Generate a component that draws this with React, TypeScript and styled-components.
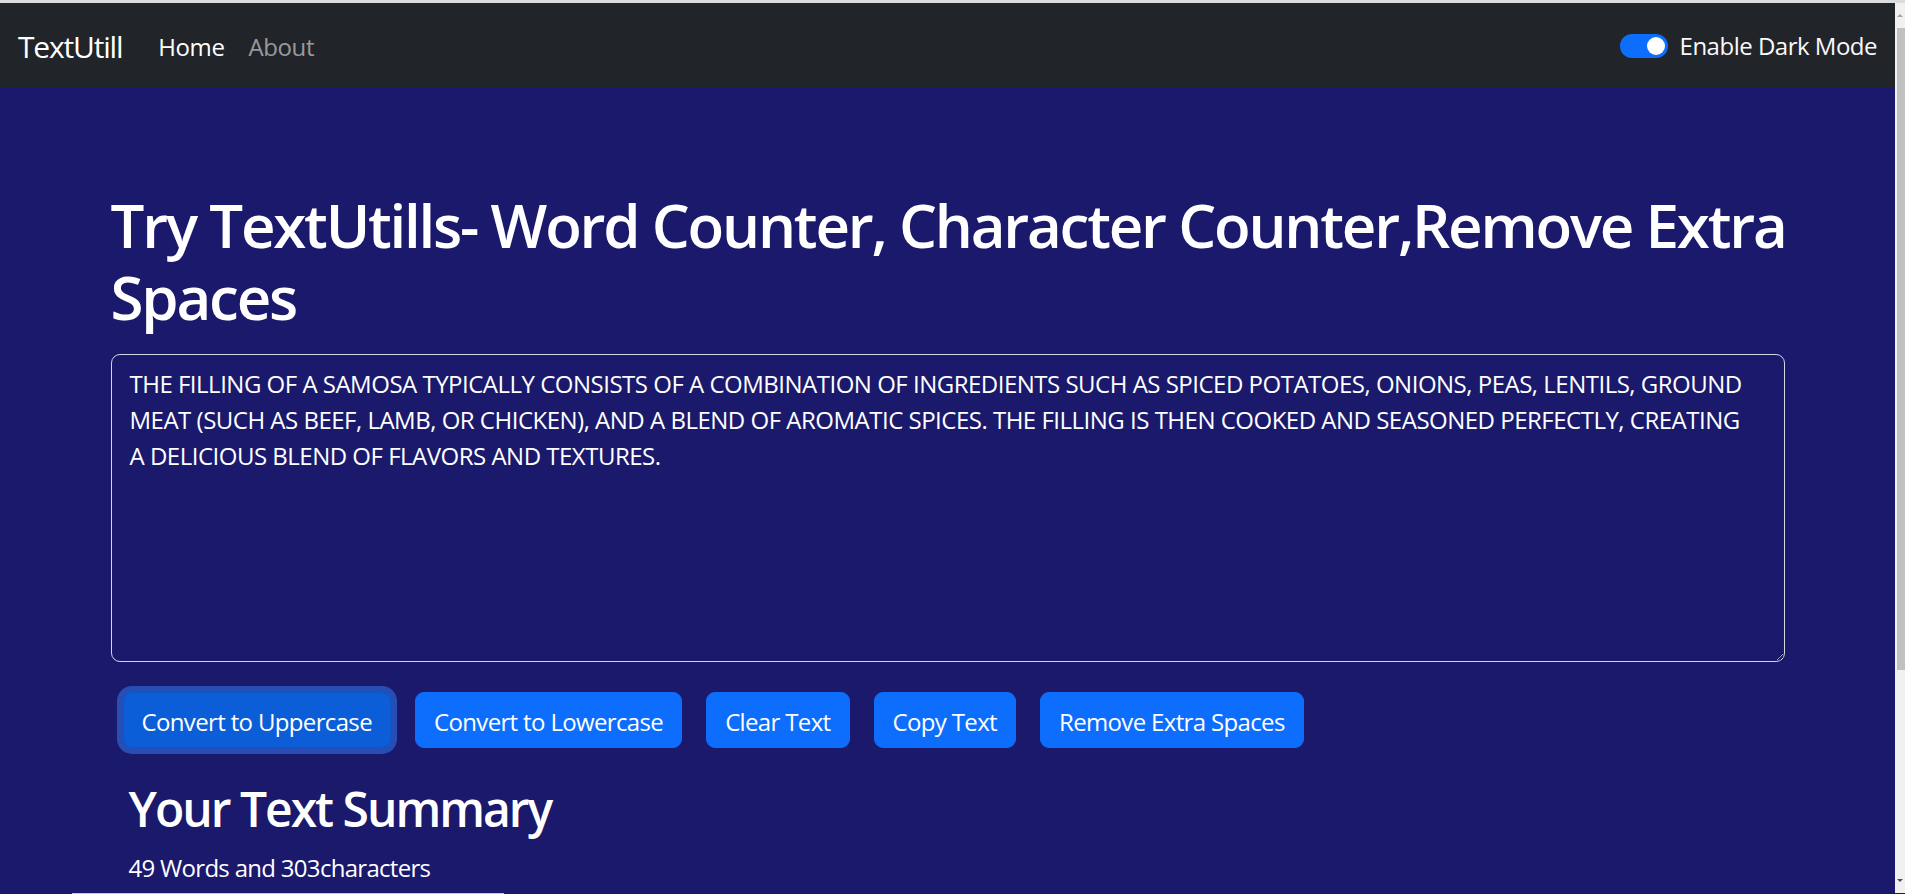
import React from "react";
import styled, { createGlobalStyle } from "styled-components";

const GlobalStyle = createGlobalStyle`
  html, body {
    margin: 0;
    padding: 0;
    overflow: hidden;
    background: #1a196c;
  }
  * { box-sizing: border-box; }
  body {
    font-family: "Open Sans", "Noto Sans", sans-serif;
  }
`;

const Frame = styled.div`
  width: 1905px;
  height: 894px;
  display: flex;
  flex-direction: column;
`;

const TopStrip = styled.div`
  height: 3px;
  background: #dcdcdc;
  flex: none;
`;

const Middle = styled.div`
  flex: 1;
  min-height: 0;
  display: flex;
`;

const Page = styled.div`
  flex: 1;
  min-width: 0;
  background: #1a196c;
  overflow: hidden;
  color: #fff;
`;

const Navbar = styled.nav`
  background: #212529;
  padding: 12px 18px;
  display: flex;
  align-items: center;
  justify-content: space-between;
`;

const NavLeft = styled.div`
  display: flex;
  align-items: center;
`;

const Brand = styled.a`
  font-size: 30px;
  line-height: 1.5;
  padding: 9px 0 6px;
  margin-right: 24px;
  letter-spacing: -1.2px;
  color: #fff;
  text-decoration: none;
`;

const NavList = styled.ul`
  display: flex;
  list-style: none;
  margin: 0;
  padding: 0;
`;

const NavLink = styled.a<{ $active?: boolean }>`
  display: block;
  font-size: 24px;
  line-height: 1.5;
  padding: 14px 12px 10px;
  letter-spacing: -0.4px;
  color: ${(p) => (p.$active ? "#fff" : "rgba(255,255,255,0.55)")};
  text-decoration: none;
`;

const SwitchWrap = styled.label`
  display: flex;
  align-items: center;
  gap: 12px;
  font-size: 24px;
  line-height: 1.5;
  letter-spacing: -0.5px;
  color: #f8f9fa;
`;

const SwitchLabel = styled.span`
  padding-top: 2px;
`;

const SwitchTrack = styled.span`
  width: 48px;
  height: 24px;
  border-radius: 12px;
  background: #0d6efd;
  display: flex;
  align-items: center;
  justify-content: flex-end;
  padding: 0 3px;
  margin-top: 2px;
`;

const SwitchKnob = styled.span`
  width: 18px;
  height: 18px;
  border-radius: 50%;
  background: #fff;
`;

const AlertSlot = styled.div`
  height: 75px;
`;

const Container = styled.div`
  width: 1710px;
  margin: 24px auto;
  padding: 0 18px;
`;

const Title = styled.h1`
  font-size: 60px;
  line-height: 1.2;
  font-weight: 600;
  letter-spacing: -2.2px;
  white-space: nowrap;
  padding-top: 3px;
  margin: 0 0 21px;
  color: #fff;
`;

const TextBox = styled.textarea`
  display: block;
  width: 100%;
  font-family: inherit;
  font-size: 24px;
  line-height: 1.5;
  letter-spacing: -0.5px;
  padding: 11px 30px 7px 18px;
  color: #fff;
  background: #1a196c;
  border: 1px solid #d4d6e2;
  border-radius: 9px;
  margin: 0 0 24px;
  outline: none;
`;

const ButtonRow = styled.div`
  display: flex;
  flex-wrap: wrap;
`;

const ActionButton = styled.button<{ $focused?: boolean }>`
  font-family: inherit;
  font-size: 24px;
  line-height: 1.5;
  letter-spacing: -0.65px;
  padding: 11px 18px 7px;
  margin: 6px 12px;
  color: #fff;
  background: ${(p) => (p.$focused ? "#0b5ed7" : "#0d6efd")};
  border: 1px solid ${(p) => (p.$focused ? "#0a58ca" : "#0d6efd")};
  border-radius: 9px;
  box-shadow: ${(p) => (p.$focused ? "0 0 0 6px rgba(49,132,253,0.5)" : "none")};
  cursor: pointer;
`;

const Summary = styled.section`
  margin: 24px 0;
  padding: 0 18px;
`;

const SummaryTitle = styled.h2`
  font-size: 48px;
  line-height: 1.2;
  font-weight: 600;
  letter-spacing: -2px;
  padding-top: 2px;
  margin: 0 0 10px;
`;

const SummaryText = styled.p`
  font-size: 24px;
  line-height: 1.5;
  letter-spacing: -0.7px;
  padding-top: 2px;
  margin: 0;
`;

const Scrollbar = styled.div`
  width: 10px;
  flex: none;
  background: #f1f1f1;
  display: flex;
  flex-direction: column;
  align-items: flex-end;
`;

const ArrowCell = styled.div`
  height: 25px;
  width: 10px;
  display: flex;
  align-items: center;
  justify-content: center;
`;

const ArrowUp = styled.span`
  width: 0;
  height: 0;
  border-left: 3px solid transparent;
  border-right: 3px solid transparent;
  border-bottom: 3px solid #a3a3a3;
`;

const ArrowDown = styled.span`
  width: 0;
  height: 0;
  border-left: 3px solid transparent;
  border-right: 3px solid transparent;
  border-top: 3px solid #505050;
`;

const Thumb = styled.div`
  width: 8px;
  height: 642px;
  background: #c1c1c1;
`;

const Spacer = styled.div`
  flex: 1;
`;

const BottomStrip = styled.div`
  height: 1px;
  flex: none;
  background: #202020;
  display: flex;
`;

const BottomSegment = styled.div<{ $w: number; $c: string }>`
  width: ${(p) => p.$w}px;
  background: ${(p) => p.$c};
`;

const TEXT =
  "THE FILLING OF A SAMOSA TYPICALLY CONSISTS OF A COMBINATION OF INGREDIENTS SUCH AS SPICED POTATOES, ONIONS, PEAS, LENTILS, GROUND MEAT (SUCH AS BEEF, LAMB, OR CHICKEN), AND A BLEND OF AROMATIC SPICES. THE FILLING IS THEN COOKED AND SEASONED PERFECTLY, CREATING A DELICIOUS BLEND OF FLAVORS AND TEXTURES.";

export default function App() {
  return (
    <>
      <GlobalStyle />
      <Frame>
        <TopStrip />
        <Middle>
          <Page>
            <Navbar>
              <NavLeft>
                <Brand href="#">TextUtill</Brand>
                <NavList>
                  <li>
                    <NavLink $active href="#">Home</NavLink>
                  </li>
                  <li>
                    <NavLink href="#">About</NavLink>
                  </li>
                </NavList>
              </NavLeft>
              <SwitchWrap>
                <SwitchTrack>
                  <SwitchKnob />
                </SwitchTrack>
                <SwitchLabel>Enable Dark Mode</SwitchLabel>
              </SwitchWrap>
            </Navbar>
            <AlertSlot />
            <Container>
              <Title>
                Try TextUtills- Word Counter, Character Counter,Remove Extra
                <br />
                Spaces
              </Title>
              <TextBox rows={8} defaultValue={TEXT} />
              <ButtonRow>
                <ActionButton $focused>Convert to Uppercase</ActionButton>
                <ActionButton>Convert to Lowercase</ActionButton>
                <ActionButton>Clear Text</ActionButton>
                <ActionButton>Copy Text</ActionButton>
                <ActionButton>Remove Extra Spaces</ActionButton>
              </ButtonRow>
              <Summary>
                <SummaryTitle>Your Text Summary</SummaryTitle>
                <SummaryText>49 Words and 303characters</SummaryText>
              </Summary>
            </Container>
          </Page>
          <Scrollbar>
            <ArrowCell>
              <ArrowUp />
            </ArrowCell>
            <Thumb />
            <Spacer />
            <ArrowCell>
              <ArrowDown />
            </ArrowCell>
          </Scrollbar>
        </Middle>
        <BottomStrip>
          <BottomSegment $w={72} $c="#202020" />
          <BottomSegment $w={432} $c="#c8c8d0" />
        </BottomStrip>
      </Frame>
    </>
  );
}
